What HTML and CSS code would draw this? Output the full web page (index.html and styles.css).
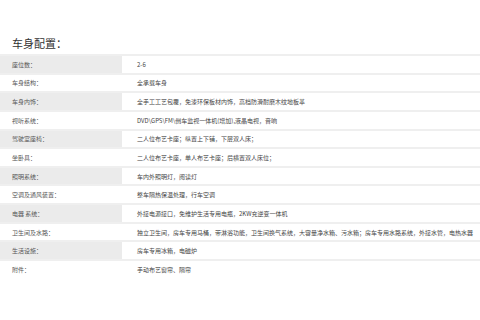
FILE: index.html
```html
<!DOCTYPE html>
<html lang="zh-CN">
<head>
<meta charset="utf-8">
<title>车身配置</title>
<link rel="stylesheet" href="styles.css">
</head>
<body>
<div class="page">
  <h2 class="title">车身配置：</h2>
  <div class="specs">
    <div class="row odd"><div class="label">座位数：</div><div class="value">2-6</div></div>
    <div class="row"><div class="label">车身结构：</div><div class="value">全承载车身</div></div>
    <div class="row odd"><div class="label">车身内饰：</div><div class="value">全手工工艺包覆，免漆环保板材内饰，高档防滑耐磨木纹地板革</div></div>
    <div class="row"><div class="label">视听系统：</div><div class="value">DVD\GPS\FM\倒车监视一体机(增加),液晶电视，音响</div></div>
    <div class="row odd"><div class="label">驾驶室座椅：</div><div class="value">二人位布艺卡座；纵置上下铺，下层双人床；</div></div>
    <div class="row"><div class="label">坐卧具：</div><div class="value">二人位布艺卡座，单人布艺卡座；后横置双人床位；</div></div>
    <div class="row odd"><div class="label">照明系统：</div><div class="value">车内外照明灯，阅读灯</div></div>
    <div class="row"><div class="label">空调及通风装置：</div><div class="value">整车隔热保温处理，行车空调</div></div>
    <div class="row odd"><div class="label">电器 系统：</div><div class="value">外接电源接口，免维护生活专用电瓶，2KW充逆变一体机</div></div>
    <div class="row"><div class="label">卫生间及水路：</div><div class="value">独立卫生间，房车专用马桶，带淋浴功能，卫生间换气系统，大容量净水箱、污水箱；房车专用水路系统，外接水管，电热水器</div></div>
    <div class="row odd"><div class="label">生活设施：</div><div class="value">房车专用冰箱，电磁炉</div></div>
    <div class="row"><div class="label">附件：</div><div class="value">手动布艺窗帘、隔帘</div></div>
  </div>
</div>
</body>
</html>
```

FILE: styles.css
```css
html, body {
  margin: 0;
  padding: 0;
  background: #ffffff;
}

body {
  font-family: "Noto Sans CJK SC", "Noto Sans", sans-serif;
  color: #444;
}

.page {
  width: 480px;
  padding-top: 35px;
}

.title {
  margin: 0 0 0 12px;
  height: 19px;
  font-size: 11px;
  line-height: 16px;
  font-weight: 400;
  color: #333;
}

.specs {
  display: flex;
  flex-direction: column;
}

.row {
  display: grid;
  grid-template-columns: 122px 1fr;
  height: 18.65px;
  box-sizing: border-box;
  border-top: 2px solid #efefef;
  font-size: 6px;
  white-space: nowrap;
}

.label {
  display: flex;
  align-items: center;
  padding-left: 12px;
  color: #555;
}

.row.odd .label {
  background: #ebebeb;
}

.value {
  display: flex;
  align-items: center;
  padding-left: 15px;
  color: #444;
  overflow: hidden;
}
```
